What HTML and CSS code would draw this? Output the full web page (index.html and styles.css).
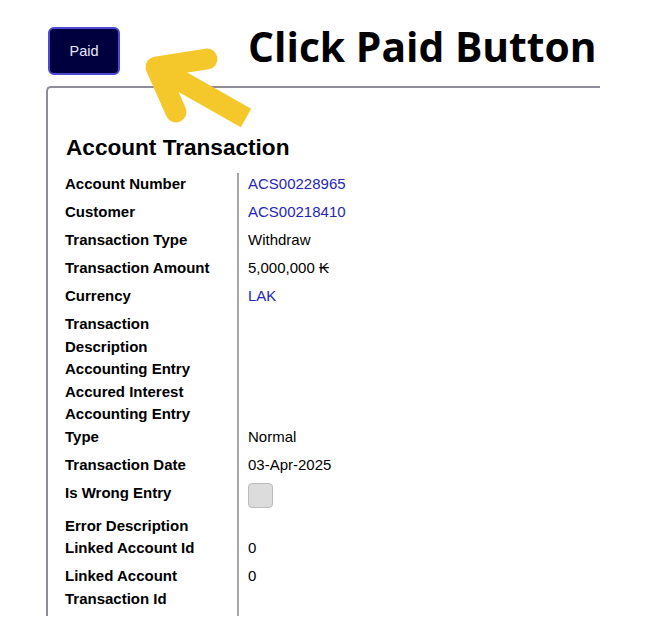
FILE: index.html
```html
<!DOCTYPE html>
<html lang="en">
<head>
<meta charset="utf-8">
<title>Account Transaction</title>
<link rel="stylesheet" href="styles.css">
</head>
<body>
<div class="page">
  <div class="toolbar">
    <button class="btn-paid" type="button">Paid</button>
  </div>

  <section class="panel">
    <h2 class="panel-title">Account Transaction</h2>
    <div class="details">
      <div class="label">Account Number</div>
      <div class="value link">ACS00228965</div>

      <div class="label">Customer</div>
      <div class="value link">ACS00218410</div>

      <div class="label">Transaction Type</div>
      <div class="value">Withdraw</div>

      <div class="label">Transaction Amount</div>
      <div class="value">5,000,000 ₭</div>

      <div class="label">Currency</div>
      <div class="value link">LAK</div>

      <div class="label tight">Transaction Description</div>
      <div class="value tight"></div>

      <div class="label tight">Accounting Entry Accured Interest</div>
      <div class="value tight"></div>

      <div class="label">Accounting Entry Type</div>
      <div class="value bottom">Normal</div>

      <div class="label">Transaction Date</div>
      <div class="value">03-Apr-2025</div>

      <div class="label roomy">Is Wrong Entry</div>
      <div class="value roomy"><input class="check" type="checkbox" disabled></div>

      <div class="label tight">Error Description</div>
      <div class="value tight"></div>

      <div class="label">Linked Account Id</div>
      <div class="value">0</div>

      <div class="label">Linked Account Transaction Id</div>
      <div class="value">0</div>
    </div>
  </section>

  <svg class="arrow" viewBox="130 40 130 90" width="130" height="90" aria-hidden="true">
    <path d="M246 118 L156 67" fill="none" stroke="#f4c82b" stroke-width="21" stroke-linecap="butt"/>
    <path d="M207 59 L156 67 L176 112" fill="none" stroke="#f4c82b" stroke-width="21" stroke-linecap="round" stroke-linejoin="round"/>
  </svg>
  <div class="callout">Click Paid Button</div>
</div>
</body>
</html>
```

FILE: styles.css
```css
* {
  box-sizing: border-box;
}

html, body {
  margin: 0;
  background: #ffffff;
}

body {
  font-family: "Liberation Sans", Arial, sans-serif;
  color: #000;
}

.page {
  position: relative;
  padding: 27px 0 0 46px;
  width: 659px;
  height: 641px;
}

.toolbar {
  padding-left: 2px;
}

.btn-paid {
  display: block;
  width: 72px;
  height: 48px;
  margin: 0;
  padding: 0;
  background: #00003e;
  border: 2px solid #4a4ad2;
  border-radius: 6px;
  color: #e8e8ff;
  font-family: "Liberation Sans", Arial, sans-serif;
  font-size: 14.5px;
}

.panel {
  margin-top: 11px;
  width: 554px;
  border-top: 2px solid #8f8b9b;
  border-left: 2px solid #8f8b9b;
  border-top-left-radius: 5px;
}

.panel-title {
  margin: 46.5px 0 12.5px 18px;
  font-size: 22.6px;
  line-height: 26px;
  font-weight: 700;
}

.details {
  display: grid;
  grid-template-columns: 172px 1fr;
  padding-left: 17px;
  font-size: 15px;
  line-height: 22.5px;
}

.label {
  font-weight: 700;
  padding-right: 17px;
  padding-bottom: 5.5px;
}

.value {
  border-left: 2px solid #a7a7ab;
  padding-left: 9px;
  padding-bottom: 5.5px;
}

.tight {
  padding-bottom: 0;
}

.roomy {
  padding-bottom: 7px;
}

.bottom {
  display: flex;
  align-items: flex-end;
}

.link {
  color: #2626b4;
}

.check {
  appearance: none;
  -webkit-appearance: none;
  display: block;
  margin: 1px 0 0;
  width: 25px;
  height: 25px;
  background: #dcdcdc;
  border: 1px solid #bcbcbc;
  border-radius: 4px;
}

.arrow {
  position: absolute;
  left: 130px;
  top: 40px;
}

.callout {
  position: absolute;
  left: 248px;
  top: 18px;
  font-family: "Open Sans", sans-serif;
  font-weight: 700;
  font-size: 40.8px;
  white-space: nowrap;
  color: #000;
}
```
